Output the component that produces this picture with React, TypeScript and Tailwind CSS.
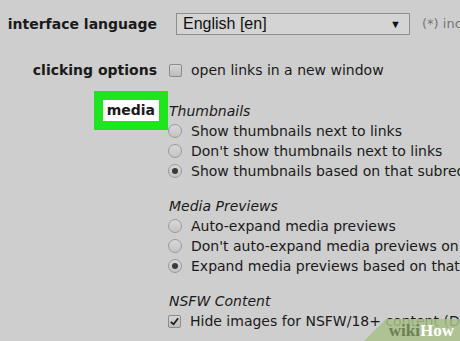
const verdana = "font-['DejaVu_Sans',Verdana,sans-serif]";

function Radio({ checked }: { checked?: boolean }) {
  return (
    <span className="w-[14px] h-[14px] shrink-0 rounded-full border border-[#9a9a9a] bg-gradient-to-b from-[#d8d8d8] to-[#c4c4c4] flex items-center justify-center">
      {checked && <span className="w-[6px] h-[6px] rounded-full bg-[#3a3a3a]" />}
    </span>
  );
}

function Box({ checked }: { checked?: boolean }) {
  return (
    <span className="w-[13px] h-[13px] shrink-0 rounded-[2px] border border-[#8c8c8c] bg-gradient-to-b from-[#d6d6d6] to-[#bdbdbd] flex items-center justify-center">
      {checked && (
        <svg viewBox="0 0 12 12" className="w-[11px] h-[11px]">
          <path d="M2 6.5 L5 9 L10 2.5" fill="none" stroke="#222" strokeWidth="2" />
        </svg>
      )}
    </span>
  );
}

function Option({ label, checked, box }: { label: string; checked?: boolean; box?: boolean }) {
  return (
    <div className="flex items-center gap-[9px] h-[20px] whitespace-nowrap">
      {box ? <Box checked={checked} /> : <Radio checked={checked} />}
      <span>{label}</span>
    </div>
  );
}

export default function App() {
  return (
    <div className={`relative w-[460px] h-[341px] overflow-hidden bg-[#cecece] text-[#1a1a1a] text-[14px] ${verdana}`}>
      <div className="flex flex-col pt-[13px]">
        <div className="flex items-center h-[22px] whitespace-nowrap">
          <div className="w-[157px] shrink-0 text-right font-bold">interface language</div>
          <div className="ml-[19px] shrink-0 w-[234px] h-[22px] border border-[#8e8e8e] bg-[#d4d4d4] flex items-center justify-between pl-[6px] pr-[8px] font-['Liberation_Sans',Arial,sans-serif] text-[16px] text-[#111]">
            <span>English [en]</span>
            <span className="text-[11px]">▼</span>
          </div>
          <div className="ml-[12px] shrink-0 text-[13px] text-[#777]">(*) incomplete</div>
        </div>

        <div className="flex items-center h-[22px] mt-[24px] whitespace-nowrap">
          <div className="w-[157px] shrink-0 text-right font-bold">clicking options</div>
          <div className="ml-[12px]">
            <Option box label="open links in a new window" />
          </div>
        </div>

        <div className="flex mt-[10px]">
          <div className="w-[168px] shrink-0 flex justify-end items-start">
            <div className="border-[9px] border-[#1fe51f] bg-white px-[4px] h-[39px] flex items-center font-bold">
              media
            </div>
          </div>
          <div className="flex flex-col pt-[10px] whitespace-nowrap">
            <div className="italic h-[20px] flex items-center ml-[1px]">Thumbnails</div>
            <Option label="Show thumbnails next to links" />
            <Option label="Don't show thumbnails next to links" />
            <Option checked label="Show thumbnails based on that subreddit's media preferences" />
            <div className="italic h-[20px] flex items-center ml-[1px] mt-[15px]">Media Previews</div>
            <Option label="Auto-expand media previews" />
            <Option label="Don't auto-expand media previews on comments pages" />
            <Option checked label="Expand media previews based on that subreddit's media preferences" />
            <div className="italic h-[20px] flex items-center ml-[1px] mt-[15px]">NSFW Content</div>
            <Option box checked label="Hide images for NSFW/18+ content (Don't show)" />
          </div>
        </div>
      </div>

      <div className="absolute right-0 bottom-0 w-[96px] h-[22px] bg-[#a9c08a]/85 [clip-path:polygon(22px_0,100%_0,100%_100%,0_100%)] flex items-center justify-end pr-[6px] font-['Liberation_Serif',serif] font-bold text-[17px] leading-none">
        <span className="text-[#6d7f55]">wiki</span>
        <span className="text-white">How</span>
      </div>
    </div>
  );
}
